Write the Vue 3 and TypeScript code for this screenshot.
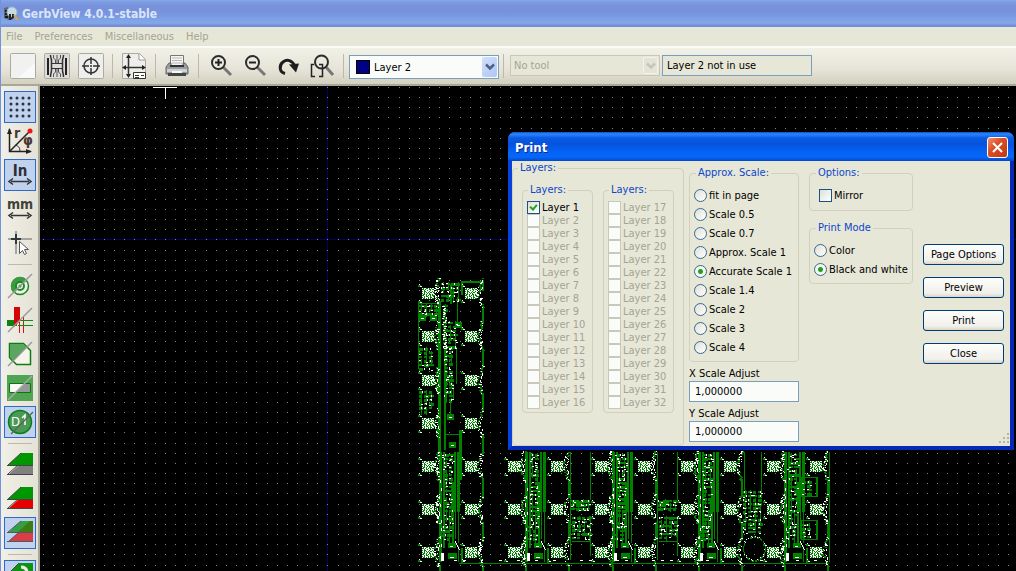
<script setup lang="ts">
import { ref } from 'vue'

const menus = ['File', 'Preferences', 'Miscellaneous', 'Help']

const layerGroups = [
  Array.from({ length: 16 }, (_, i) => i + 1),
  Array.from({ length: 16 }, (_, i) => i + 17),
]
const checkedLayers = ref<number[]>([1])

const scales = [
  'fit in page', 'Scale 0.5', 'Scale 0.7', 'Approx. Scale 1', 'Accurate Scale 1',
  'Scale 1.4', 'Scale 2', 'Scale 3', 'Scale 4',
]
const scale = ref('Accurate Scale 1')
const printModes = ['Color', 'Black and white']
const printMode = ref('Black and white')
const mirror = ref(false)
const xScale = ref('1,000000')
const yScale = ref('1,000000')
const actions = ['Page Options', 'Preview', 'Print', 'Close']

// Grid dots of the drawing area
const gridPath = (() => {
  const parts: string[] = []
  for (let j = 0; j < 48; j++) {
    for (let i = 0; i < 240; i++) {
      parts.push(`M${Math.round(43 + i * 10.16)} ${Math.round(87 + j * 10.16)}h1v1h-1z`)
    }
  }
  return parts.join('')
})()

// Board artwork: copper in green, pad outlines and silk in white
const green: string[] = []
const white: string[] = []
let seed = 7
const rnd = () => {
  seed = (seed * 1103515245 + 12345) % 2147483648
  return seed / 2147483648
}
const box = (list: string[], x: number, y: number, w: number, h: number) =>
  list.push(`M${x} ${y}h${w}v${h}h${-w}z`)

const chipRows = [
  '#o##oo#o#o##', 'oo#o###oo#oo', '##o##o##o###', 'o#oo###o##o#', '##o#o#o#oo#o',
  'o#o##o#o####', '#oo#o##oo#o#', 'oo##o#o#o#oo', '##o#oo##o##o', 'o#o###o#oo##', '#oo#o#o#o#oo',
]

function chip(cx: number, cy: number, outer: boolean) {
  box(green, cx - 6, cy - 5, 12, 11)
  chipRows.forEach((row, j) => [...row].forEach((c, i) => {
    if (c === '#') box(white, cx - 6 + i, cy - 5 + j, 1, 1)
  }))
  for (const dy of [-8, 8]) {
    box(green, cx - 10, cy + dy, 3, 2)
    box(white, cx - 9, cy + dy - 1, 1, 1)
    box(white, cx - 8, cy + dy + 1, 2, 1)
  }
  for (let dy = -15; dy <= 14; dy++) {
    const reach = 6 + Math.round(Math.abs(dy) / (outer ? 3 : 4))
    if (rnd() < 0.85) box(green, cx + reach + Math.floor(rnd() * 3) - 1, cy + dy, 2, 1)
    if (rnd() < 0.55) box(white, cx + reach + Math.floor(rnd() * 3) - 1, cy + dy, 1 + Math.floor(rnd() * 2), 1)
    if (Math.abs(dy) < 8 && rnd() < 0.5) box(white, cx + reach + 3, cy + dy, 1, 1)
  }
  box(green, cx + 11, cy + 13, 2, 18)
}

function parts(x: number, y: number, w: number, h: number) {
  for (let yy = y; yy < y + h; yy += 4) {
    for (let xx = x; xx < x + w - 3; xx += 5) {
      if (rnd() < 0.85) box(green, xx, yy, 3 + Math.floor(rnd() * 3), 2 + Math.floor(rnd() * 2))
      if (rnd() < 0.5) box(green, xx + 2, yy - 1, 1, 5)
      if (rnd() < 0.5) box(white, xx + Math.floor(rnd() * 4), yy + Math.floor(rnd() * 3), 2, 1)
      if (rnd() < 0.4) box(white, xx + Math.floor(rnd() * 4), yy, 1, 2)
    }
  }
}

function spine(x: number, top: number) {
  box(green, x + 11, top, 3, 562 - top)
  box(green, x + 15, top, 2, 548 - top)
  box(green, x + 26, top, 2, 60)
  box(green, x + 29, top, 3, 60)
  box(green, x + 24, 482, 2, 66)
  box(green, x + 30, 511, 1, 32)
  box(green, x + 27, 511, 1, 28)
  box(green, x + 21, 511, 1, 32)
  parts(x + 16, top + 2, 13, 76)
  parts(x + 14, 526, 9, 16)
  box(green, x + 20, 543, 8, 5)
  box(white, x + 22, 546, 3, 1)
  box(green, x + 20, 553, 9, 6)
  box(white, x + 13, 553, 3, 8)
  box(white, x + 22, 557, 4, 1)
  box(green, x + 30, 546, 1, 16)
  box(green, x + 33, 548, 2, 15)
  for (let i = 0; i < 9; i++) {
    box(white, x + 27 + Math.floor(i / 2), 541 + i, 1, 1)
    box(white, x + 11 + Math.floor(rnd() * 3), 480 + i * 8, 1, 3)
    box(white, x + 14 + Math.floor(rnd() * 12), 455 + i * 2, 2, 1)
  }
}

const rowsY = [293, 336, 380, 423, 466, 509, 552]
const unitX = [428, 514, 601, 687, 773]
unitX.forEach((x, u) => {
  rowsY.forEach((y, r) => {
    if (u > 0 && r < 4) return
    chip(x, y, false)
    chip(x + 43, y, true)
  })
  spine(x, 452)
})

// Upper half of the first column
box(green, 438, 301, 3, 150)
box(green, 444, 350, 2, 100)
box(green, 418, 303, 1, 66)
box(green, 418, 303, 22, 1)
box(green, 457, 297, 1, 25)
box(green, 450, 284, 2, 20)
box(green, 461, 281, 23, 2)
box(green, 482, 281, 2, 10)
box(green, 461, 281, 2, 14)
box(green, 456, 347, 1, 37)
box(green, 453, 384, 1, 16)
box(green, 459, 430, 3, 50)
box(green, 445, 434, 16, 1)
parts(441, 283, 20, 20)
parts(443, 305, 5, 42)
parts(443, 322, 18, 26)
parts(444, 347, 12, 55)
parts(419, 305, 19, 10)
parts(419, 348, 18, 22)
parts(419, 391, 18, 22)
for (let i = 0; i < 22; i++) {
  box(white, 442 + Math.floor(rnd() * 4), 306 + i * 2, 2, 1)
}
for (const [x, y] of [[419, 315], [430, 315], [447, 414], [449, 442], [455, 322]]) {
  box(green, x, y, 7, 6)
  box(white, x + 2, y + 3, 3, 1)
}
box(green, 450, 400, 1, 15)

// Sub-circuits between the columns
for (const x of [570, 657]) {
  box(green, x, 452, 1, 108)
  box(green, x + 20, 452, 1, 48)
  box(green, x + 2, 501, 10, 3)
  box(green, x + 4, 508, 16, 1)
  box(green, x + 2, 541, 19, 1)
  box(green, x + 20, 516, 1, 40)
  parts(x + 1, 500, 20, 10)
  parts(x + 2, 517, 19, 22)
}
box(green, 744, 452, 1, 38)
box(green, 761, 452, 1, 44)
parts(743, 491, 20, 44)
for (let a = 0; a < 60; a++) {
  const t = (a / 60) * Math.PI * 2
  const x = Math.round(754 + Math.cos(t) * 11)
  const y = Math.round(548 + Math.sin(t) * 12)
  if (rnd() < 0.75) box(green, x, y, 1, 2)
  if (rnd() < 0.3) box(white, x + Math.floor(rnd() * 3) - 1, y, 1, 1)
}
for (const y of [477, 520]) {
  box(green, 801, y, 16, 1)
  box(green, 816, y, 2, 20)
  box(green, 801, y + 19, 16, 1)
  box(green, 801, y, 1, 20)
  parts(802, y + 4, 9, 13)
}
box(green, 829, 452, 1, 110)
box(green, 459, 563, 370, 1)
for (let x = 445; x < 828; x += 9) if (rnd() < 0.5) box(white, x, 560, 3, 1)

const greenPath = green.join('')
const whitePath = white.join('')
</script>

<template>
  <div class="app">
    <header class="titlebar">
      <svg class="app-icon" width="16" height="16" viewBox="0 0 16 16" aria-hidden="true">
        <path d="M1 2l4-1 1 3v10l-5-2z" fill="#5c6670" />
        <path d="M2 5h2M2 8h3M2 11h3" stroke="#16191e" stroke-width="2" />
        <circle cx="9" cy="6" r="5" fill="#c5dbe8" stroke="#9db6c8" />
        <path d="M7 8v6M10 8v3l-2 2" fill="none" stroke="#22262c" stroke-width="2" />
        <path d="M11 9l4 5" stroke="#e2a53a" stroke-width="2" />
      </svg>
      <h1>GerbView 4.0.1-stable</h1>
    </header>

    <nav class="menubar">
      <button v-for="m in menus" :key="m" type="button">{{ m }}</button>
    </nav>

    <div class="toolbar">
      <button class="tool" type="button" aria-label="Erase all layers">
        <svg width="26" height="26" viewBox="0 0 26 26">
          <rect x=".5" y=".5" width="25" height="25" rx="1" fill="#f1f1ef" stroke="#aaa9a3" />
          <path d="M25 10v15H8z" fill="#fff" opacity=".6" />
        </svg>
      </button>
      <button class="tool" type="button" aria-label="Load Gerber file">
        <svg width="26" height="26" viewBox="0 0 26 26">
          <rect x=".5" y=".5" width="25" height="25" rx="1" fill="#dddcd8" stroke="#aaa9a3" />
          <path d="M4 5v17M22 5v17" stroke="#222" stroke-width="2" />
          <path d="M6.500 2c0 3 1 3 1 6v9c0 3-1 3-1 7M19.500 2c0 3-1 3-1 6v9c0 3 1 3 1 7" fill="none" stroke="#333" stroke-width="1.500" />
          <path d="M9.500 2v3l2 2v4M13 2v9M16.500 2v3l-2 2v4M9.500 24v-3l2-2v-4M13 24v-9M16.500 24v-3l-2-2v-4" fill="none" stroke="#555" />
          <path d="M8 10.500h10M8 15.500h10" stroke="#333" />
        </svg>
      </button>
      <button class="tool" type="button" aria-label="Load drill file">
        <svg width="26" height="26" viewBox="0 0 26 26">
          <rect x=".5" y=".5" width="25" height="25" rx="1" fill="#eeeeeb" stroke="#aaa9a3" />
          <circle cx="13" cy="13" r="7" fill="none" stroke="#333" stroke-width="1.500" />
          <path d="M13 4v7M13 15v7M4 13h7M15 13h7M12 13h2" stroke="#333" stroke-width="1.500" />
        </svg>
      </button>
      <span class="sep"></span>
      <button class="tool" type="button" aria-label="Page settings">
        <svg width="26" height="26" viewBox="0 0 26 26">
          <path d="M1.500 .500h17l6 6v19h-23z" fill="#eeeeeb" stroke="#aaa9a3" />
          <path d="M18 1v6h6" fill="#fff" stroke="#999" />
          <path d="M7.500 3v20M3 14.500h20" stroke="#333" stroke-width="1.500" />
          <path d="M5 5l2.500-4 2.500 4zM5 21l2.500 4 2.500-4zM5 12l-4 2.500 4 2.500zM21 12l4 2.500-4 2.500z" fill="#222" />
          <path d="M12.500 19.500h12v6h-12zM14 22.500h4M20 22.500h3M14 24.500h4" fill="#fff" stroke="#333" />
        </svg>
      </button>
      <span class="sep"></span>
      <button class="tool" type="button" aria-label="Print layers">
        <svg width="26" height="26" viewBox="0 0 26 26">
          <path d="M6.500 12V2.500h13V12" fill="#f4f4f2" stroke="#777" />
          <path d="M8 5h10M8 7.500h10M8 10h10" stroke="#b8b8b5" />
          <path d="M5 10h2v3h12v-3h2l3 4v7H2v-7z" fill="#999d9e" stroke="#666" />
          <path d="M6 12h14v2H6z" fill="#303334" />
          <path d="M3 16h20v3H3z" fill="#cfd2d2" />
          <path d="M4 20h18v3H4z" fill="#444" />
          <path d="M8 18h10v2H8z" fill="#f7f7f7" />
        </svg>
      </button>
      <span class="sep"></span>
      <button class="tool" type="button" aria-label="Zoom in">
        <svg width="26" height="26" viewBox="0 0 26 26">
          <path d="M16 14l8 8" stroke="#777" stroke-width="3" />
          <circle cx="11.500" cy="9.500" r="6.500" fill="#eceae0" stroke="#2c2c2c" stroke-width="2" />
          <path d="M8 9.500h7M11.500 6v7" stroke="#222" stroke-width="2" />
        </svg>
      </button>
      <button class="tool" type="button" aria-label="Zoom out">
        <svg width="26" height="26" viewBox="0 0 26 26">
          <path d="M16 14l8 8" stroke="#777" stroke-width="3" />
          <circle cx="11.500" cy="9.500" r="6.500" fill="#eceae0" stroke="#2c2c2c" stroke-width="2" />
          <path d="M8 9.500h7" stroke="#222" stroke-width="2" />
        </svg>
      </button>
      <button class="tool" type="button" aria-label="Redraw view">
        <svg width="26" height="26" viewBox="0 0 26 26">
          <path d="M10 20.500C4 19 4 12 8 9s9-2 12 4" fill="none" stroke="#1d1d1d" stroke-width="3" />
          <path d="M14 11.500l10-1-3 9z" fill="#1d1d1d" />
        </svg>
      </button>
      <button class="tool" type="button" aria-label="Fit in window">
        <svg width="26" height="26" viewBox="0 0 26 26">
          <path d="M17 14l7 8" stroke="#777" stroke-width="3" />
          <circle cx="12.500" cy="9" r="6.500" fill="#eceae0" fill-opacity=".5" stroke="#2c2c2c" stroke-width="2" />
          <path d="M5 11.500H2.500v12H6M10 11.500h3.500v12H10" fill="none" stroke="#222" stroke-width="1.500" />
        </svg>
      </button>
      <span class="sep"></span>
      <div class="combo layer-combo">
        <span class="swatch"></span>
        <select aria-label="Active layer"><option>Layer 2</option></select>
        <span class="arrow"><svg width="10" height="8" viewBox="0 0 10 8"><path d="M1 1.500l4 4 4-4" fill="none" stroke="#4a6284" stroke-width="2.500" /></svg></span>
      </div>
      <span class="sep"></span>
      <div class="combo tool-combo">
        <select aria-label="Tool" disabled><option>No tool</option></select>
        <span class="arrow"><svg width="10" height="8" viewBox="0 0 10 8"><path d="M1 1.500l4 4 4-4" fill="none" stroke="#c6c6b8" stroke-width="2.500" /></svg></span>
      </div>
      <input class="info" aria-label="Layer status" value="Layer 2 not in use" readonly />
    </div>

    <main class="work">
      <aside class="sidebar">
        <button class="on" type="button" aria-label="Grid">
          <svg width="32" height="32" viewBox="0 0 32 32">
            <g fill="#2b3440">
              <template v-for="r in 4" :key="r">
                <circle v-for="c in 4" :key="c" :cx="1 + c * 6" :cy="1 + r * 6" r="1.500" />
              </template>
            </g>
          </svg>
        </button>
        <button type="button" aria-label="Polar coordinates">
          <svg width="32" height="32" viewBox="0 0 32 32">
            <path d="M5.500 4v22.500H27M5.500 26.500L25 7" fill="none" stroke="#222" stroke-width="1.500" />
            <path d="M3 9l2.500-6L8 9zM22 24l6 2.500-6 2.500z" fill="#222" />
            <path d="M11 20q5 1 5 6" fill="none" stroke="#333" />
            <circle cx="26" cy="6" r="2.500" fill="#f01414" />
            <text x="10" y="13" font-size="14" font-weight="700" fill="#4a3636">r</text>
            <text x="19" y="20" font-size="14" font-weight="700" fill="#4a3636">φ</text>
          </svg>
        </button>
        <button class="on" type="button" aria-label="Inches">
          <svg width="32" height="32" viewBox="0 0 32 32">
            <text x="16" y="17" font-size="15" font-weight="700" text-anchor="middle" fill="#2e2e36">In</text>
            <path d="M7 22.500h18M9 19.500l-4 3 4 3M23 19.500l4 3-4 3" fill="none" stroke="#333" stroke-width="1.500" />
          </svg>
        </button>
        <button type="button" aria-label="Millimetres">
          <svg width="32" height="32" viewBox="0 0 32 32">
            <text x="16" y="16" font-size="14" font-weight="700" text-anchor="middle" fill="#424238">mm</text>
            <path d="M7 22.500h18M9 19.500l-4 3 4 3M23 19.500l4 3-4 3" fill="none" stroke="#333" stroke-width="1.500" />
          </svg>
        </button>
        <button type="button" aria-label="Cursor shape">
          <svg width="32" height="32" viewBox="0 0 32 32">
            <path d="M4 12h24M12 4v23" stroke="#a6a6a0" stroke-width="2" />
            <path d="M7 12h10M12 7v10" stroke="#2e3a3e" stroke-width="2" />
            <path d="M15.500 14.500v12l3-3 2 4 2-1-2-4h4z" fill="#fff" stroke="#555" />
          </svg>
        </button>
        <span class="hsep"></span>
        <button type="button" aria-label="Show flashed items">
          <svg width="32" height="32" viewBox="0 0 32 32">
            <circle cx="16" cy="16" r="8.500" fill="#f0f0e8" stroke="#1a8a22" stroke-width="1.500" />
            <path d="M16 7a9 9 0 0 0-9 9 9 9 0 0 0 3 7L23 10a9 9 0 0 0-7-3z" fill="#3a9c42" />
            <circle cx="16" cy="16" r="4" fill="#eef3ea" stroke="#1a8a22" stroke-width="2" />
            <circle cx="16" cy="16" r="1.500" fill="#1a8a22" />
            <path d="M4 28L28 4" stroke="#999" stroke-width="1.500" />
          </svg>
        </button>
        <button type="button" aria-label="Show lines">
          <svg width="32" height="32" viewBox="0 0 32 32">
            <path d="M15.500 18v11M19.500 12v17" stroke="#d81515" />
            <path d="M16 16.500h13M14 21.500h15" stroke="#0c8a15" />
            <path d="M3 16h10v6H3z" fill="#0c8412" />
            <path d="M10 3h6v14l-6 6z" fill="#d10606" />
            <path d="M4 28L28 4" stroke="#999" stroke-width="1.500" />
          </svg>
        </button>
        <button type="button" aria-label="Show polygons">
          <svg width="32" height="32" viewBox="0 0 32 32">
            <path d="M5.500 5.500h14l7 7v14h-14l-7-7z" fill="#f5f5ec" stroke="#0d7d14" stroke-width="1.500" />
            <path d="M5.500 5.500h14l3.500 3.500L8.500 23l-3-3.500z" fill="#5aa560" stroke="#0d7d14" />
            <path d="M4 28L28 4" stroke="#999" stroke-width="1.500" />
          </svg>
        </button>
        <button type="button" aria-label="Show negative objects">
          <svg width="32" height="32" viewBox="0 0 32 32">
            <path d="M3 3h26v26H3z" fill="#52a455" />
            <path d="M5.500 11.500h21v9h-21z" fill="#fafaf4" stroke="#087a0d" />
            <path d="M20 12h6v8H12z" fill="#969a96" />
            <path d="M4 28L28 4" stroke="#aaa" stroke-width="1.500" />
          </svg>
        </button>
        <button class="on" type="button" aria-label="Show D-codes">
          <svg width="32" height="32" viewBox="0 0 32 32">
            <circle cx="16" cy="16" r="11.500" fill="#4a9a55" stroke="#0b7e17" stroke-width="1.500" />
            <text x="7" y="20" font-size="13" fill="#fff">D</text>
            <path d="M18 12l3-3v10" fill="none" stroke="#fff" stroke-width="1.500" />
            <path d="M7 28L29 6" stroke="#5a665c" stroke-width="1.500" />
          </svg>
        </button>
        <span class="hsep"></span>
        <button type="button" aria-label="Raw mode">
          <svg width="32" height="32" viewBox="0 0 32 32">
            <path d="M4 26L14 17h15v9z" fill="#808080" />
            <path d="M4 16L17 4h12v12z" fill="#009800" />
            <path d="M3 25.500h26M3 16.500h26M4 25l10-9M4 16L17 4" stroke="#444" />
          </svg>
        </button>
        <button type="button" aria-label="Stacked mode">
          <svg width="32" height="32" viewBox="0 0 32 32">
            <path d="M4 26L14 17h15v9z" fill="#e60000" />
            <path d="M4 16L17 4h12v12z" fill="#009800" />
            <path d="M3 25.500h26M3 16.500h26M4 25l10-9M4 16L17 4" stroke="#444" />
          </svg>
        </button>
        <button class="on" type="button" aria-label="Transparent mode">
          <svg width="32" height="32" viewBox="0 0 32 32">
            <path d="M4 25L14 16h15v9z" fill="#dc3c44" />
            <path d="M4 16L17 4h12v12z" fill="#3d7d14" />
            <path d="M4 16L17 4h9L13 16z" fill="#35a042" />
            <path d="M3 24.500h26M3 15.500h26M4 25l10-9M4 15L17 4" stroke="#4c5868" />
          </svg>
        </button>
        <span class="hsep"></span>
        <button class="on" type="button" aria-label="Layer manager">
          <svg width="32" height="32" viewBox="0 0 32 32">
            <path d="M4 14L15 3h14v26H4z" fill="#0a9210" />
            <path d="M17 7q6 0 6 6" fill="none" stroke="#e8e8e8" stroke-width="3" />
            <path d="M4 14L15 3" stroke="#444" />
          </svg>
        </button>
      </aside>

      <section class="canvas" aria-label="Board view">
        <svg class="board" shape-rendering="crispEdges" aria-hidden="true">
          <g transform="translate(-40 -86)">
            <path d="M327 86h1v600h-1zM40 239h2400v1H40z" fill="#000068" />
            <path :d="gridPath" fill="#858585" />
            <path :d="greenPath" fill="#008200" />
            <path :d="whitePath" fill="#fff" />
            <path d="M153 87h24v1h-24zM165 87h1v12h-1z" fill="#fff" />
          </g>
        </svg>

        <form class="dialog" role="dialog" aria-labelledby="print-title" @submit.prevent>
          <div class="dialog-title">
            <h2 id="print-title">Print</h2>
            <button class="close" type="button" aria-label="Close dialog">
              <svg width="13" height="13" viewBox="0 0 13 13"><path d="M2 2l9 9M11 2l-9 9" stroke="#fff" stroke-width="2" /></svg>
            </button>
          </div>
          <div class="dialog-body">
            <fieldset class="layers">
              <legend>Layers:</legend>
              <div class="layer-columns">
                <fieldset v-for="(group, g) in layerGroups" :key="g" class="layer-list">
                  <legend>Layers:</legend>
                  <label v-for="n in group" :key="n" class="layer-row" :class="{ off: n !== 1 }">
                    <input v-model="checkedLayers" type="checkbox" :value="n" :disabled="n !== 1" />
                    <span>Layer {{ n }}</span>
                  </label>
                </fieldset>
              </div>
            </fieldset>

            <div class="scale-col">
              <fieldset class="choices">
                <legend>Approx. Scale:</legend>
                <label v-for="s in scales" :key="s" class="row">
                  <input v-model="scale" type="radio" name="scale" :value="s" /><span>{{ s }}</span>
                </label>
              </fieldset>
              <label class="field"><span>X Scale Adjust</span><input v-model="xScale" type="text" /></label>
              <label class="field"><span>Y Scale Adjust</span><input v-model="yScale" type="text" /></label>
            </div>

            <div class="option-col">
              <fieldset class="choices indent">
                <legend>Options:</legend>
                <label class="row"><input v-model="mirror" type="checkbox" /><span>Mirror</span></label>
              </fieldset>
              <fieldset class="choices">
                <legend>Print Mode</legend>
                <label v-for="m in printModes" :key="m" class="row">
                  <input v-model="printMode" type="radio" name="mode" :value="m" /><span>{{ m }}</span>
                </label>
              </fieldset>
            </div>

            <div class="actions">
              <button v-for="a in actions" :key="a" type="button">{{ a }}</button>
            </div>
          </div>
          <svg class="grip" width="12" height="12" viewBox="0 0 12 12" aria-hidden="true">
            <path d="M9 0h2v2H9zM5 4h2v2H5zM9 4h2v2H9zM1 8h2v2H1zM5 8h2v2H5zM9 8h2v2H9z" fill="#b8b4a2" />
          </svg>
        </form>
      </section>
    </main>
  </div>
</template>

<style>
body { margin: 0; overflow: hidden; }
</style>

<style scoped>
.app, .app button, .app input, .app select {
  font-family: "DejaVu Sans Condensed", "DejaVu Sans", "Noto Sans", sans-serif;
  font-size: 11px;
}
* { box-sizing: border-box; }
.app {
  display: flex;
  flex-direction: column;
  height: 100vh;
  overflow: hidden;
  border-left: 1px solid #7590dc;
  background: #e7e7d7;
  color: #000;
  white-space: nowrap;
}
h1, h2 { margin: 0; font-size: 12px; line-height: 16px; }
button { padding: 0; border: 0; background: none; }

.titlebar {
  flex: none;
  display: flex;
  align-items: center;
  gap: 3px;
  height: 27px;
  padding: 1px 2px 0;
  background: linear-gradient(#86a9e6 0, #7b9ce2 2px, #7790da 7px, #7795de 14px, #82a7e8 22px, #80a3e6 24px, #778fd9 25px, #758dd7);
}
.titlebar h1 { color: #dbe5f8; }

.menubar {
  flex: none;
  display: flex;
  gap: 12px;
  height: 19px;
  padding: 0 5px;
}
.menubar button { color: #a4a494; line-height: 18px; }

.toolbar {
  flex: none;
  display: flex;
  align-items: flex-start;
  height: 40px;
  padding: 5px 5px 0;
  border-top: 2px solid #fafcf8;
  border-bottom: 2px solid #a9a797;
  background: linear-gradient(#f2f1e7, #e6e4d8 60%, #d3d0c0);
}
.tool {
  display: flex;
  justify-content: center;
  width: 34px;
  height: 26px;
}
.sep {
  width: 9px;
  height: 24px;
  margin-top: 1px;
  background: linear-gradient(#bcb9aa, #bcb9aa) center / 1px 100% no-repeat;
}
.combo { position: relative; width: 150px; margin: 2px 0 0 1px; }
.combo select {
  appearance: none;
  display: block;
  width: 100%;
  height: 24px;
  padding: 0 24px;
  border: 1px solid #7b9ebd;
  border-radius: 0;
  background: #f9fcf9;
  color: #000;
  opacity: 1;
}
.swatch {
  position: absolute;
  left: 7px;
  top: 5px;
  width: 14px;
  height: 14px;
  border: 1px solid #000;
  background: #000084;
}
.arrow {
  position: absolute;
  top: 2px;
  right: 2px;
  bottom: 2px;
  display: flex;
  align-items: center;
  justify-content: center;
  width: 15px;
  border-radius: 2px;
  background: linear-gradient(135deg, #d3e0fb, #adc6f5);
  pointer-events: none;
}
.tool-combo { margin-left: 2px; }
.tool-combo select {
  height: 21px;
  padding: 0 3px;
  border-color: #c9c8b8;
  background: #e7e7d7;
  color: #a4a494;
}
.tool-combo .arrow { border: 1px solid #f4f4ec; background: #e4e3d8; }
.info {
  width: 150px;
  height: 21px;
  margin: 2px 0 0 2px;
  padding: 0 4px;
  border: 1px solid #7b9ebd;
  background: #e7e7d7;
}

.work { flex: 1; display: flex; min-height: 0; }
.sidebar {
  flex: none;
  display: flex;
  flex-direction: column;
  gap: 2px;
  width: 39px;
  padding: 5px 3px 0;
  overflow: hidden;
  border-right: 2px solid #a9a797;
  background: linear-gradient(90deg, #f1f0e6, #e4e1d6);
}
.sidebar button { flex: none; width: 32px; height: 32px; }
.sidebar svg { display: block; }
.sidebar .on { background: #c1d2ee; box-shadow: inset 0 0 0 1px #316ac5; }
.hsep {
  flex: none;
  width: 24px;
  height: 7px;
  margin-left: 4px;
  background: linear-gradient(#bcb9aa, #bcb9aa) center / 100% 1px no-repeat;
}
.canvas { position: relative; flex: 1; min-width: 0; background: #000; }
.board { display: block; width: 100%; height: 100%; }

.dialog {
  position: absolute;
  top: 46px;
  right: 2px;
  border: 4px solid;
  border-top: 0;
  border-color: #0842dc #0628b4 #0628b4 #0842dc;
  border-radius: 7px 7px 0 0;
  background: #e7e7d7;
}
.dialog-title {
  display: flex;
  align-items: center;
  justify-content: space-between;
  height: 29px;
  margin: 0 -4px;
  padding: 2px 6px 0 7px;
  border-radius: 7px 7px 0 0;
  background: linear-gradient(#0a50cc 0, #2f86fa 2px, #0a5be4 6px, #0553dd 12px, #0562f4 20px, #0567fb 25px, #0347c8);
}
.dialog-title h2 { color: #fff; font-size: 13px; text-shadow: 1px 1px 0 #0b2c90; }
.close {
  display: flex;
  align-items: center;
  justify-content: center;
  width: 21px;
  height: 21px;
  border: 1px solid #fff;
  border-radius: 3px;
  background: linear-gradient(135deg, #ee9276, #dc4f27 40%, #bd3811);
}
.dialog-body { display: flex; padding-right: 6px; }
fieldset {
  min-width: 0;
  margin: 0;
  padding: 0;
  border: 1px solid #d0d0bc;
  border-radius: 4px;
}
legend {
  height: 14px;
  margin-left: 2px;
  padding: 0 2px;
  color: #0b46cc;
  line-height: 14px;
}
.layers { width: 172px; margin-right: 5px; }
.layers > legend { margin-left: 5px; }
.layer-columns { display: flex; gap: 10px; padding: 8px 9px 32px; }
.layer-list { flex: 1; padding: 4px 4px 3px; }
.layers .layer-list legend { margin-left: 1px; }
.layer-row { display: flex; align-items: center; gap: 2px; height: 13px; }
.layer-row.off { color: #a4a494; }
.scale-col { width: 110px; margin-right: 10px; padding-top: 5px; }
.option-col {
  display: flex;
  flex-direction: column;
  gap: 10px;
  width: 104px;
  margin-right: 10px;
  padding-top: 5px;
}
.choices { padding: 6px 4px 4px; }
.indent { padding-bottom: 5px; }
.indent .row { padding-left: 5px; }
.row { display: flex; align-items: center; gap: 2px; height: 19px; }
input[type="checkbox"], input[type="radio"] {
  appearance: none;
  flex: none;
  width: 13px;
  height: 13px;
  margin: 0;
  border: 1px solid #1c5180;
  background: linear-gradient(135deg, #dfdfd8, #fff);
}
input[type="radio"] { border-color: #3a6890; border-radius: 50%; }
input[type="radio"]:checked {
  background: radial-gradient(circle, #21a121 0, #21a121 2px, #f4f6f0 3px);
}
input[type="checkbox"]:disabled { border-color: #cac8bb; background: #f9fcf9; }
input[type="checkbox"]:checked::after {
  content: "";
  display: block;
  width: 3px;
  height: 5px;
  margin: 1px 0 0 3px;
  border: solid #21a121;
  border-width: 0 2px 2px 0;
  box-sizing: content-box;
  transform: rotate(40deg);
}
.field { display: block; margin-top: 5px; }
.field span { display: block; height: 14px; line-height: 14px; }
.field input {
  display: block;
  width: 100%;
  height: 21px;
  padding: 0 5px;
  border: 1px solid #7b9ebd;
  background: #f9fcf9;
}
.actions { display: flex; flex-direction: column; gap: 12px; padding-top: 83px; }
.actions button {
  width: 81px;
  height: 21px;
  border: 1px solid #003c74;
  border-radius: 3px;
  background: linear-gradient(#fdfdfb, #f1f0ea 80%, #d9d5c9);
  text-align: center;
}
.grip { position: absolute; right: 0; bottom: 1px; }
</style>
